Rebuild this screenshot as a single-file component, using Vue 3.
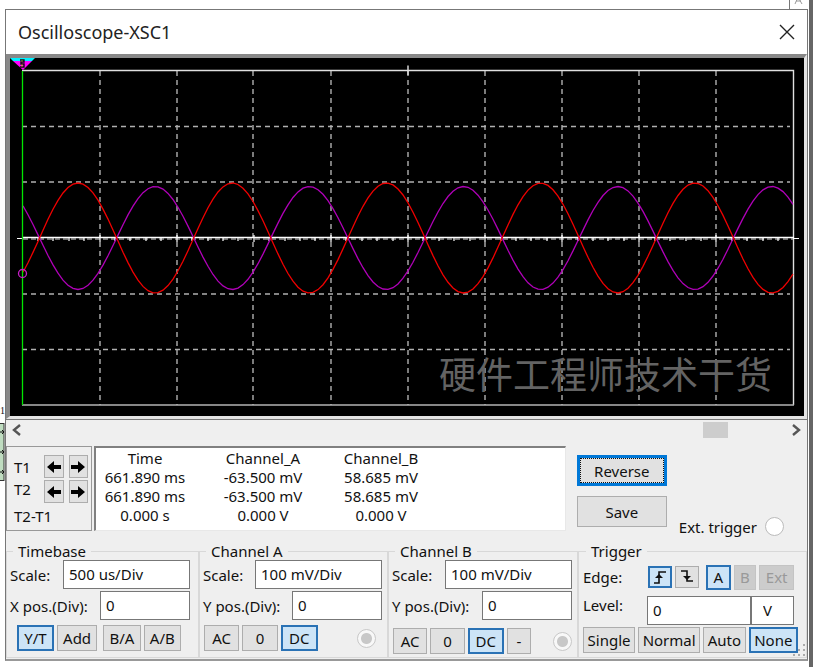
<template>
  <div class="desktop">
    <div class="workspace">
      <span class="net-label">1</span>
      <svg class="part" width="5" height="58" viewBox="0 0 5 58">
        <rect x="-2" y="0.5" width="6" height="57" fill="#bfdcc0" stroke="#333" />
        <path d="M0 9h4M2 7l2 2-2 2M0 29h4M2 27l2 2-2 2M0 49h4M2 47l2 2-2 2" stroke="#111" fill="none" />
      </svg>
      <svg class="corner" width="20" height="9" viewBox="0 0 20 9">
        <path d="M0.5 0v9" stroke="#777" />
        <path d="M6 4L9 -3L13 4M7 1h5" stroke="#999" fill="none" />
      </svg>
    </div>

    <main class="window">
      <header class="title-bar">
        <h1>Oscilloscope-XSC1</h1>
        <button class="close" aria-label="Close">
          <svg width="16" height="16" viewBox="0 0 16 16">
            <path d="M1 1L15 15M15 1L1 15" stroke="#222" stroke-width="1.4" />
          </svg>
        </button>
      </header>

      <section class="screen">
        <svg class="trace" viewBox="0 0 794 358">
          <g class="grid-lines">
            <path v-for="x in gridX" :key="'x' + x" :d="`M${x} 13V347`" />
            <path v-for="y in gridY" :key="'y' + y" :d="`M12 ${y}H780`" />
          </g>
          <path d="M12 12.5H783.5V347M398 7.5V17" stroke="#e0e0e0" stroke-width="1.4" fill="none" />
          <path d="M12 347H784" stroke="#b4b4b4" stroke-width="1.5" />
          <path d="M13 179.5H784" stroke="#fff" stroke-width="1.5" />
          <path d="M13 181H784" stroke="#ddd" stroke-dasharray="5 3" />
          <path d="M7 180.5H13M783 180.5H789" stroke="#fff" />
          <path :d="tickPath" stroke="#fff" stroke-width="1.2" />
          <path :d="channelB" class="wave wave-b" />
          <path :d="channelA" class="wave wave-a" />
          <path d="M12.5 13V347" stroke="#00e600" stroke-width="1.3" />
          <circle cx="12.5" cy="215.5" r="4" fill="none" stroke="#c81ec8" stroke-width="1.3" />
          <path d="M0 0H25L22 3H3Z" fill="#00f0ff" />
          <path d="M3 3H22L13 12Z" fill="#ff00ff" />
          <path d="M10 2h4v2h-3v2h3v3h-4" stroke="#111" stroke-width="1.4" fill="none" />
          <path d="M12 2.5v1M12 6.5v2" stroke="#d8d000" />
        </svg>
        <span class="watermark">硬件工程师技术干货</span>
      </section>

      <div class="scroller">
        <button aria-label="Scroll left">
          <svg width="9" height="12" viewBox="0 0 9 12"><path d="M8 1L2 6L8 11" /></svg>
        </button>
        <input v-model="scroll" type="range" min="0" max="1000" aria-label="Time position" />
        <button aria-label="Scroll right">
          <svg width="9" height="12" viewBox="0 0 9 12"><path d="M1 1L7 6L1 11" /></svg>
        </button>
      </div>

      <section class="readout">
        <div class="cursors">
          <div v-for="c in ['T1', 'T2']" :key="c" class="cursor-row">
            <span>{{ c }}</span>
            <button :aria-label="c + ' left'">
              <svg width="14" height="14" viewBox="0 0 14 14"><path d="M0 7L7 1V5H14V9H7V13Z" /></svg>
            </button>
            <button :aria-label="c + ' right'">
              <svg width="14" height="14" viewBox="0 0 14 14"><path d="M14 7L7 1V5H0V9H7V13Z" /></svg>
            </button>
          </div>
          <span class="delta">T2-T1</span>
        </div>

        <div class="values">
          <table>
            <thead>
              <tr><th>Time</th><th>Channel_A</th><th>Channel_B</th></tr>
            </thead>
            <tbody>
              <tr v-for="(row, i) in readings" :key="i">
                <td v-for="(cell, j) in row" :key="j">{{ cell }}</td>
              </tr>
            </tbody>
          </table>
        </div>

        <div class="actions">
          <button class="btn focused">Reverse</button>
          <button class="btn">Save</button>
        </div>
        <label class="ext-trigger">
          Ext. trigger
          <input type="radio" name="ext" />
        </label>
      </section>

      <section class="settings">
        <fieldset class="timebase">
          <legend>Timebase</legend>
          <div class="row">
            <label for="tb-scale">Scale:</label>
            <input id="tb-scale" class="scale" value="500 us/Div" />
          </div>
          <div class="row">
            <label for="tb-pos">X pos.(Div):</label>
            <input id="tb-pos" class="pos" value="0" />
          </div>
          <div class="modes">
            <button
              v-for="m in ['Y/T', 'Add', 'B/A', 'A/B']"
              :key="m"
              class="btn"
              :class="{ active: mode === m }"
              @click="mode = m"
            >{{ m }}</button>
          </div>
        </fieldset>

        <fieldset v-for="ch in channels" :key="ch.id" :class="'channel-' + ch.id">
          <legend>Channel {{ ch.id.toUpperCase() }}</legend>
          <div class="row">
            <label :for="ch.id + '-scale'">Scale:</label>
            <input :id="ch.id + '-scale'" class="scale" value="100 mV/Div" />
          </div>
          <div class="row">
            <label :for="ch.id + '-pos'">Y pos.(Div):</label>
            <input :id="ch.id + '-pos'" class="pos" value="0" />
          </div>
          <div class="coupling-row">
            <div class="coupling">
              <button
                v-for="c in ch.options"
                :key="c"
                class="btn"
                :class="{ active: ch.coupling === c, invert: c === '-' }"
                @click="ch.coupling = c"
              >{{ c }}</button>
            </div>
            <input type="radio" disabled :aria-label="'Channel ' + ch.id + ' input'" />
          </div>
        </fieldset>

        <fieldset class="trigger">
          <legend>Trigger</legend>
          <div class="row edge-row">
            <span>Edge:</span>
            <button class="btn edge" :class="{ active: edge === 'rise' }" aria-label="Rising" @click="edge = 'rise'">
              <svg width="16" height="16" viewBox="0 0 16 16">
                <path d="M2 14H7V3H14" />
                <path d="M3 9H11L7 5Z" class="tip" />
              </svg>
            </button>
            <button class="btn edge" :class="{ active: edge === 'fall' }" aria-label="Falling" @click="edge = 'fall'">
              <svg width="16" height="16" viewBox="0 0 16 16">
                <path d="M2 2H8V12H14" />
                <path d="M4 7H12L8 11Z" class="tip" />
              </svg>
            </button>
            <div class="sources">
              <button class="btn active">A</button>
              <button class="btn" disabled>B</button>
              <button class="btn" disabled>Ext</button>
            </div>
          </div>
          <div class="row level-row">
            <label for="level">Level:</label>
            <input id="level" value="0" />
            <input class="unit" value="V" aria-label="Level unit" />
          </div>
          <div class="modes">
            <button
              v-for="t in ['Single', 'Normal', 'Auto', 'None']"
              :key="t"
              class="btn"
              :class="{ active: triggerMode === t }"
              @click="triggerMode = t"
            >{{ t }}</button>
          </div>
        </fieldset>
      </section>

      <svg class="grip" width="14" height="14" viewBox="0 0 14 14">
        <path d="M12 1v2M12 6v2M12 11v2M7 6v2M7 11v2M2 11v2" stroke="#aaa" stroke-width="2" />
      </svg>
    </main>
  </div>
</template>

<script setup>
import { ref, reactive } from 'vue'

const scroll = ref(917)
const mode = ref('Y/T')
const edge = ref('rise')
const triggerMode = ref('None')

const readings = [
  ['661.890 ms', '-63.500 mV', '58.685 mV'],
  ['661.890 ms', '-63.500 mV', '58.685 mV'],
  ['0.000 s', '0.000 V', '0.000 V'],
]

const channels = reactive([
  { id: 'a', options: ['AC', '0', 'DC'], coupling: 'DC' },
  { id: 'b', options: ['AC', '0', 'DC', '-'], coupling: 'DC' },
])

const gridX = [90, 167, 243, 321, 398, 475, 552, 629, 706]
const gridY = [68.5, 124, 236, 291.5]

// five ticks per division, a taller one on the division line
let tickPath = ''
for (let i = 1; i < 50; i++) {
  const x = Math.round(12.5 + i * 15.42)
  tickPath += i % 5 === 0 ? `M${x} 177V184` : `M${x} 180V183`
}

function wave(amplitude) {
  const points = []
  for (let x = 13; x <= 783; x += 5) {
    const y = 180 - amplitude * Math.sin(((x - 29.5) / 154.2) * 2 * Math.PI)
    points.push(`${x} ${y.toFixed(1)}`)
  }
  return 'M' + points.join('L')
}

const channelA = wave(55)
const channelB = wave(-51.5)
</script>

<style>
body {
  margin: 0;
  background: #fff;
}
</style>

<style scoped>
* {
  box-sizing: border-box;
}

.desktop {
  position: relative;
  min-height: 100vh;
  padding: 9px 4px 7px 5px;
  border-right: 1px solid #666;
  box-shadow: inset -3px 0 #666;
  font-family: "Noto Sans", sans-serif;
  font-size: 15px;
  line-height: 18px;
  color: #111;
}

.net-label {
  position: absolute;
  left: 0;
  top: 402px;
  font-family: "Liberation Serif", serif;
  font-size: 10px;
}

.part {
  position: absolute;
  left: 0;
  top: 423px;
}

.corner {
  position: absolute;
  right: 3px;
  top: 0;
}

.window {
  position: relative;
  background: #efefef;
  border: 1px solid #777;
  border-bottom: 2px solid #999;
  padding-bottom: 1px;
}

.title-bar {
  display: flex;
  align-items: center;
  justify-content: space-between;
  height: 44px;
  padding: 0 12px;
  background: #fff;
}

h1 {
  margin: 0;
  font-size: 18px;
  font-weight: 400;
  color: #222;
}

button,
input {
  font: inherit;
  color: inherit;
  margin: 0;
}

button {
  padding: 0;
}

.close {
  display: flex;
  border: 0;
  background: none;
}

.screen {
  position: relative;
  background: #000;
  border: 4px solid #888;
  border-right: 3px solid #e4e4e4;
  border-bottom: 3px solid #e4e4e4;
  box-shadow: 0 1px #777;
}

.trace {
  display: block;
  width: 100%;
}

.grid-lines {
  stroke: #b0b0b0;
  stroke-width: 1.4;
  stroke-dasharray: 5 4;
}

.wave {
  fill: none;
  stroke-width: 1.3;
}

.wave-a {
  stroke: #f00000;
}

.wave-b {
  stroke: #b000b8;
}

.watermark {
  position: absolute;
  right: 32px;
  bottom: 17px;
  font-family: "Noto Sans CJK SC", sans-serif;
  font-weight: 400;
  font-size: 37px;
  line-height: 52px;
  color: #636363;
}

.scroller {
  display: flex;
  align-items: center;
  height: 22px;
  padding: 0 6px;
}

.scroller button {
  display: flex;
  border: 0;
  background: none;
}

.scroller path {
  fill: none;
  stroke: #555;
  stroke-width: 2.4;
}

.scroller input {
  flex: 1;
  height: 16px;
  margin: 0 3px;
  background: none;
  appearance: none;
}

.scroller input::-webkit-slider-thumb {
  appearance: none;
  width: 25px;
  height: 16px;
  background: #cdcdcd;
}

.readout {
  display: flex;
  margin-top: 5px;
  height: 85px;
}

.cursors {
  width: 86px;
  padding: 8px 3px 0 7px;
  border: 1px solid #999;
}

.cursor-row {
  display: flex;
  align-items: center;
  gap: 5px;
  margin-bottom: 2px;
}

.cursor-row + .cursor-row {
  align-items: flex-start;
}

.cursor-row span {
  width: 26px;
}

.cursor-row button {
  display: flex;
  align-items: center;
  justify-content: center;
  width: 20px;
  height: 23px;
  border: 1px solid #adadad;
  background: #e1e1e1;
}

.delta {
  display: block;
  margin-top: 4px;
}

.values {
  flex: 1;
  margin-left: 2px;
  background: #fff;
  border: 1px solid #e8e8e8;
  border-top: 2px solid #808080;
  border-left: 2px solid #808080;
}

table {
  border-collapse: collapse;
}

th,
td {
  width: 118px;
  height: 19px;
  padding: 0 20px 0 0;
  font-weight: 400;
  text-align: center;
  white-space: nowrap;
}

.actions {
  display: flex;
  flex-direction: column;
  gap: 10px;
  width: 90px;
  margin: 9px 12px 0 11px;
}

.actions .btn {
  height: 31px;
}

.btn {
  border: 1px solid #adadad;
  background: #e1e1e1;
}

.btn.active {
  border: 2px solid #2a72b5;
  background: #cce4f7;
}

.btn:disabled {
  border-color: #c4c4c4;
  background: #cccccc;
  color: #999;
}

.btn.focused {
  border: 3px solid #0078d7;
  outline: 1px dotted #111;
  outline-offset: -4px;
}

.ext-trigger {
  display: flex;
  align-items: center;
  gap: 8px;
  height: 19px;
  margin: 71px 23px 0 0;
  white-space: nowrap;
}

input[type="radio"] {
  width: 19px;
  height: 19px;
  border: 1px solid #bbb;
  border-radius: 50%;
  background: #fff;
  appearance: none;
}

input[type="radio"]:disabled {
  border-color: #c8c8c8;
  background: radial-gradient(circle, #c8c8c8 5px, #f8f8f8 6px);
}

.settings {
  display: grid;
  grid-template-columns: 193fr 189fr 190fr 229fr;
  margin-top: 11px;
}

fieldset {
  min-width: 0;
  margin: 0;
  padding: 0 5px 4px 3px;
  border: 1px solid #d8d8d8;
}

legend {
  margin-left: 3px;
  padding: 0 5px;
}

.row {
  display: flex;
  align-items: center;
  justify-content: space-between;
  height: 29px;
  margin-bottom: 2px;
}

.row label {
  white-space: nowrap;
}

.row input {
  min-width: 0;
  height: 29px;
  padding: 0 5px 2px;
  border: 1px solid #777;
  background: #fff;
}

.row .scale {
  width: 127px;
}

.row .pos {
  width: 90px;
}

.modes,
.coupling {
  display: flex;
  gap: 3px;
}

.modes,
.coupling-row {
  margin-top: 5px;
}

.modes .btn {
  flex: 1 1 auto;
  height: 26px;
}

.timebase {
  padding-right: 8px;
}

.timebase .modes {
  margin-left: 7px;
  margin-right: 9px;
}

.timebase .btn:nth-child(3) {
  margin-left: 3px;
}

.coupling-row {
  display: flex;
  align-items: center;
  justify-content: space-between;
}

.coupling {
  width: 114px;
  margin-left: 1px;
}

.coupling .btn {
  flex: 1;
  height: 26px;
}

.coupling .invert {
  flex: 0 0 24px;
}

.channel-a .coupling-row {
  margin-right: 6px;
}

.channel-b .coupling {
  width: 138px;
}

.channel-b .coupling-row {
  margin-top: 8px;
  margin-bottom: -3px;
}

.trigger {
  padding-right: 8px;
  padding-left: 4px;
}

.trigger .row {
  justify-content: flex-start;
  gap: 3px;
  margin-right: 4px;
}

.trigger .edge-row {
  height: 34px;
}

.trigger .edge-row span {
  width: 62px;
}

.edge {
  display: flex;
  align-items: center;
  justify-content: center;
  width: 24px;
  height: 22px;
}

.edge path {
  fill: none;
  stroke: #111;
  stroke-width: 1.6;
}

.edge .tip {
  fill: #111;
  stroke: none;
}

.sources {
  display: flex;
  flex: 1;
  gap: 3px;
  margin-left: 4px;
}

.sources .btn {
  flex: 1 1 auto;
  height: 25px;
}

.trigger .level-row {
  align-items: flex-start;
  gap: 0;
}

.level-row label {
  width: 64px;
}

.level-row input:nth-child(2) {
  flex: 1;
}

.level-row .unit {
  width: 43px;
  padding: 0 11px 2px;
}

.trigger .modes {
  margin-top: 0;
}

.grip {
  position: absolute;
  right: 1px;
  bottom: 2px;
}
</style>
